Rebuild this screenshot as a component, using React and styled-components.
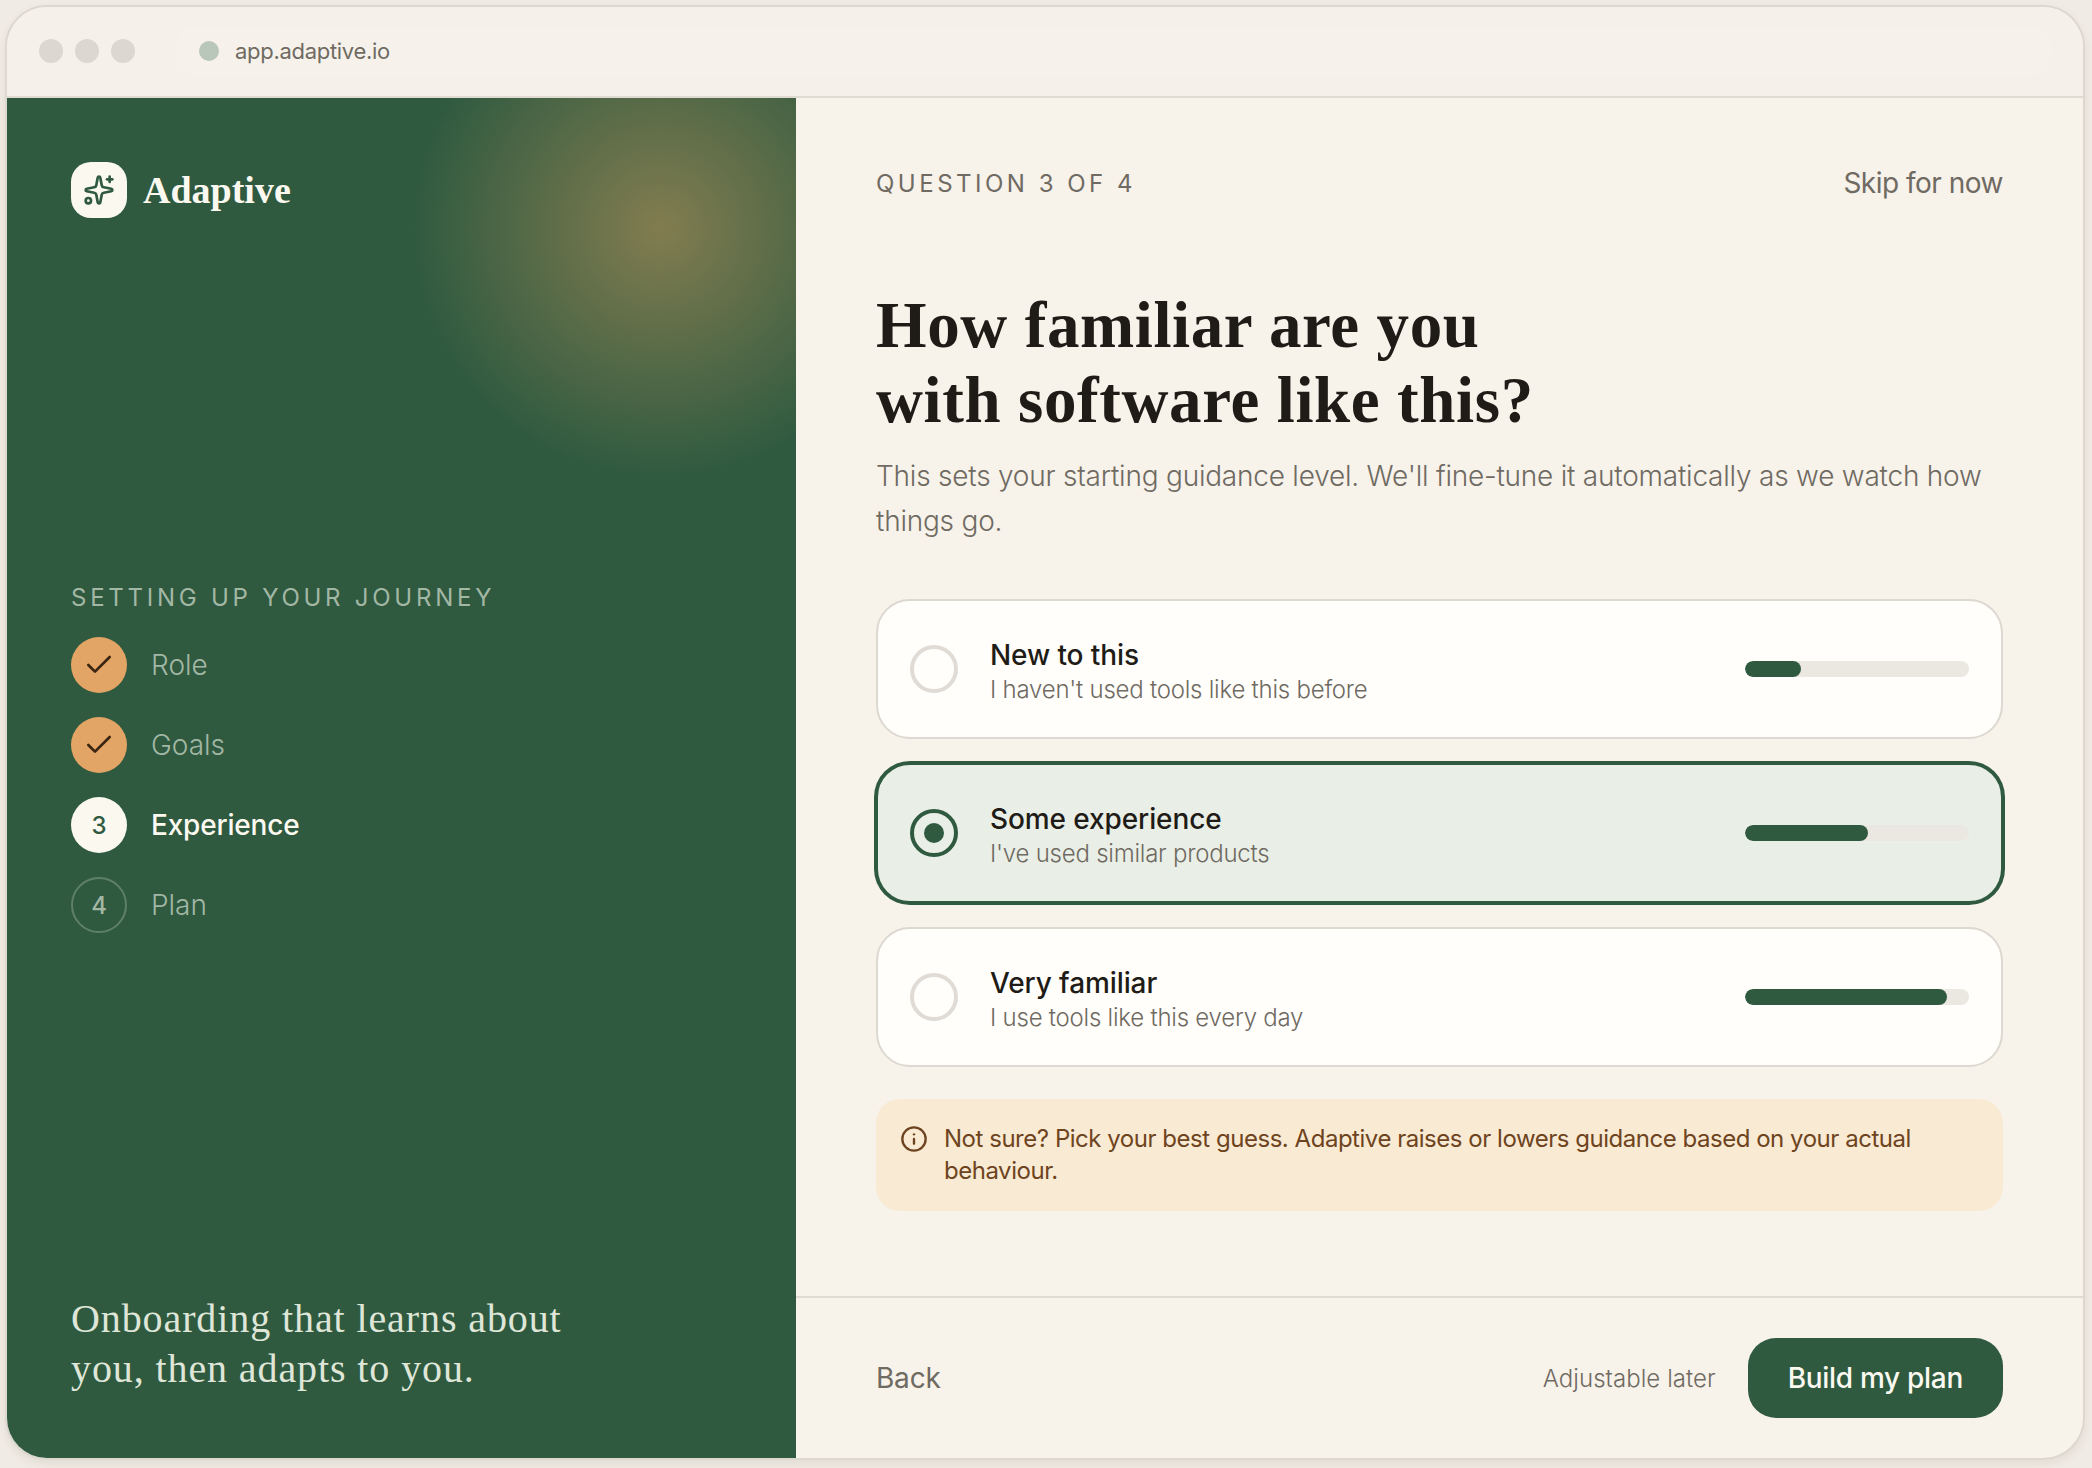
import React from 'react';
import styled, { createGlobalStyle } from 'styled-components';
import { Check, Info, Sparkles } from 'lucide-react';

const sans = `Inter, "Noto Sans", sans-serif`;
const serif = `"Liberation Serif", serif`;
const green = '#2f5a40';

const GlobalStyle = createGlobalStyle`
  * { box-sizing: border-box; }
  html, body { margin: 0; padding: 0; background: #f0ebe4; }
  body { font-family: ${sans}; }
`;

const Page = styled.div`
  width: 2092px;
  height: 1468px;
  padding: 5px 7px 8px 5px;
`;

const Window = styled.div`
  height: 100%;
  display: flex;
  flex-direction: column;
  border: 2px solid #dcd7cf;
  border-radius: 42px;
  background: #f7f2ea;
  overflow: hidden;
  box-shadow: 0 4px 10px rgba(60, 50, 30, 0.08);
`;

const TopBar = styled.header`
  height: 91px;
  flex: none;
  display: flex;
  align-items: center;
  padding: 0 32px 2px;
  border-bottom: 2px solid #dfdad2;
  background: #f5f1ea;
`;

const Dots = styled.div`
  display: flex;
  gap: 12px;
  margin-right: 40px;
`;

const Dot = styled.span`
  width: 24px;
  height: 24px;
  border-radius: 50%;
  background: #dcd8d1;
`;

const Address = styled.div`
  flex: 1;
  height: 50px;
  display: flex;
  align-items: center;
  gap: 16px;
  padding: 0 24px;
  border-radius: 24px;
  background: #f6f2eb;
  font-size: 22px;
  letter-spacing: -0.3px;
  color: #6f6a62;
`;

const Status = styled.span`
  width: 20px;
  height: 20px;
  border-radius: 50%;
  background: #b9c7bb;
`;

const Body = styled.div`
  flex: 1;
  min-height: 0;
  display: flex;
`;

const Sidebar = styled.aside`
  width: 789px;
  flex: none;
  display: flex;
  flex-direction: column;
  padding: 64px;
  color: #fcf9f1;
  background: radial-gradient(circle 250px at 654px 130px, rgba(228, 165, 98, 0.46), rgba(228, 165, 98, 0)) ${green};
`;

const Brand = styled.div`
  display: flex;
  align-items: center;
  gap: 16px;
`;

const BrandMark = styled.div`
  width: 56px;
  height: 56px;
  border-radius: 20px;
  display: flex;
  align-items: center;
  justify-content: center;
  background: #fbf8f0;
  color: ${green};
`;

const BrandName = styled.span`
  font-family: ${serif};
  font-size: 38px;
  font-weight: 700;
  color: #fbf8f0;
`;

const Steps = styled.nav`
  margin-top: 365px;
  display: flex;
  flex-direction: column;
`;

const StepsTitle = styled.div`
  font-size: 24px;
  line-height: 30px;
  letter-spacing: 3.75px;
  color: #a3b7a5;
  margin-bottom: 24px;
`;

const StepList = styled.ol`
  list-style: none;
  margin: 0;
  padding: 0;
  display: flex;
  flex-direction: column;
  gap: 24px;
`;

const StepRow = styled.li`
  display: flex;
  align-items: center;
  gap: 24px;
  font-size: 28px;
  font-weight: ${({ $state }) => ($state === 'current' ? 500 : 300)};
  letter-spacing: ${({ $state }) => ($state === 'current' ? '-0.2px' : '0')};
  color: ${({ $state }) => ($state === 'current' ? '#fcf9f1' : '#a3b7a5')};
`;

const stepCircles = {
  done: `background: #e2a565; color: #3a2412;`,
  current: `background: #fbf8f0; color: ${green};`,
  todo: `border: 2px solid #5f8068; color: #a3b7a5;`
};

const StepCircle = styled.span`
  width: 56px;
  height: 56px;
  border-radius: 50%;
  display: flex;
  align-items: center;
  justify-content: center;
  font-size: 24px;
  font-weight: 500;
  ${({ $state }) => stepCircles[$state]}
`;

const Quote = styled.p`
  margin: auto 0 0;
  font-family: ${serif};
  font-size: 40px;
  line-height: 50px;
  letter-spacing: 0.9px;
  color: #dfe6d8;
`;

const Main = styled.main`
  flex: 1;
  min-width: 0;
  display: flex;
  flex-direction: column;
`;

const Content = styled.div`
  flex: 1;
  min-height: 0;
  padding: 65px 80px 0;
`;

const MetaRow = styled.div`
  display: flex;
  justify-content: space-between;
  align-items: center;
  height: 40px;
`;

const Counter = styled.span`
  font-size: 24px;
  letter-spacing: 3.5px;
  color: #6f6a62;
`;

const Skip = styled.a`
  font-size: 28px;
  letter-spacing: -0.5px;
  color: #6f6a62;
`;

const Heading = styled.h1`
  margin: 85px 0 0;
  font-family: ${serif};
  font-size: 65px;
  line-height: 75px;
  font-weight: 700;
  letter-spacing: 0.6px;
  color: #1f1c17;
`;

const Lead = styled.p`
  margin: 16px 0 0;
  font-size: 28px;
  line-height: 45px;
  font-weight: 300;
  letter-spacing: -0.22px;
  color: #6f6a62;
`;

const Options = styled.div`
  margin-top: 55px;
  display: flex;
  flex-direction: column;
  gap: 24px;
`;

const OptionCard = styled.div`
  height: 140px;
  display: flex;
  align-items: center;
  gap: 32px;
  padding: 0 32px;
  border-radius: 34px;
  border: 2px solid ${({ $selected }) => ($selected ? green : '#ddd8d0')};
  background: ${({ $selected }) => ($selected ? '#e9efe6' : '#fffefb')};
  box-shadow: ${({ $selected }) => ($selected ? `0 0 0 2px ${green}` : 'none')};
`;

const Radio = styled.span`
  width: 48px;
  height: 48px;
  flex: none;
  border-radius: 50%;
  display: flex;
  align-items: center;
  justify-content: center;
  border: 4px solid ${({ $selected }) => ($selected ? green : '#e0dcd5')};
  &::after {
    content: "";
    display: ${({ $selected }) => ($selected ? 'block' : 'none')};
    width: 20px;
    height: 20px;
    border-radius: 50%;
    background: ${green};
  }
`;

const OptionText = styled.div`
  flex: 1;
  display: flex;
  flex-direction: column;
  margin-top: 4px;
`;

const OptionTitle = styled.span`
  font-size: 28px;
  line-height: 37px;
  font-weight: 500;
  letter-spacing: -0.1px;
  color: #1f1c17;
`;

const OptionHint = styled.span`
  font-size: 24px;
  line-height: 32px;
  font-weight: 300;
  letter-spacing: -0.23px;
  color: #6f6a62;
`;

const Meter = styled.div`
  width: 224px;
  height: 16px;
  border-radius: 8px;
  background: #ebe8e1;
  overflow: hidden;
`;

const MeterFill = styled.div`
  height: 100%;
  border-radius: 8px;
  background: ${green};
`;

const Notice = styled.div`
  margin-top: 32px;
  display: flex;
  gap: 16px;
  padding: 24px;
  border-radius: 24px;
  background: #f9ead4;
  color: #6e4420;
  font-size: 24px;
  line-height: 32px;
  letter-spacing: -0.47px;
  svg {
    flex: none;
    margin-top: 2px;
  }
`;

const Footer = styled.footer`
  height: 162px;
  flex: none;
  display: flex;
  align-items: center;
  padding: 0 80px;
  gap: 32px;
  border-top: 2px solid #dfdad2;
`;

const Back = styled.a`
  margin-right: auto;
  font-size: 28px;
  letter-spacing: -0.2px;
  color: #6f6a62;
`;

const FooterNote = styled.span`
  font-size: 24px;
  font-weight: 300;
  letter-spacing: 0.05px;
  color: #6f6a62;
`;

const PrimaryButton = styled.button`
  height: 80px;
  padding: 0 40px;
  border: 0;
  border-radius: 28px;
  background: ${green};
  color: #fbf8f0;
  font-family: ${sans};
  font-size: 28px;
  font-weight: 500;
  letter-spacing: -0.3px;
`;

const steps = [
  { label: 'Role', state: 'done' },
  { label: 'Goals', state: 'done' },
  { label: 'Experience', state: 'current', num: 3 },
  { label: 'Plan', state: 'todo', num: 4 }
];

const options = [
  { title: 'New to this', hint: "I haven't used tools like this before", level: 25 },
  { title: 'Some experience', hint: "I've used similar products", level: 55, selected: true },
  { title: 'Very familiar', hint: 'I use tools like this every day', level: 90 }
];

export default function App () {
  return (
    <Page>
      <GlobalStyle />
      <Window>
        <TopBar>
          <Dots>
            <Dot />
            <Dot />
            <Dot />
          </Dots>
          <Address>
            <Status />
            app.adaptive.io
          </Address>
        </TopBar>
        <Body>
          <Sidebar>
            <Brand>
              <BrandMark>
                <Sparkles size={32} />
              </BrandMark>
              <BrandName>Adaptive</BrandName>
            </Brand>
            <Steps>
              <StepsTitle>SETTING UP YOUR JOURNEY</StepsTitle>
              <StepList>
                {steps.map((step) => (
                  <StepRow key={step.label} $state={step.state}>
                    <StepCircle $state={step.state}>
                      {step.state === 'done' ? <Check size={32} /> : step.num}
                    </StepCircle>
                    {step.label}
                  </StepRow>
                ))}
              </StepList>
            </Steps>
            <Quote>
              Onboarding that learns about
              <br />
              you, then adapts to you.
            </Quote>
          </Sidebar>
          <Main>
            <Content>
              <MetaRow>
                <Counter>QUESTION 3 OF 4</Counter>
                <Skip>Skip for now</Skip>
              </MetaRow>
              <Heading>
                How familiar are you
                <br />
                with software like this?
              </Heading>
              <Lead>
                This sets your starting guidance level. We'll fine-tune it automatically as we watch how
                <br />
                things go.
              </Lead>
              <Options>
                {options.map((option) => (
                  <OptionCard key={option.title} $selected={option.selected}>
                    <Radio $selected={option.selected} />
                    <OptionText>
                      <OptionTitle>{option.title}</OptionTitle>
                      <OptionHint>{option.hint}</OptionHint>
                    </OptionText>
                    <Meter>
                      <MeterFill style={{ width: `${option.level}%` }} />
                    </Meter>
                  </OptionCard>
                ))}
              </Options>
              <Notice>
                <Info size={28} />
                <span>
                  Not sure? Pick your best guess. Adaptive raises or lowers guidance based on your actual
                  <br />
                  behaviour.
                </span>
              </Notice>
            </Content>
            <Footer>
              <Back>Back</Back>
              <FooterNote>Adjustable later</FooterNote>
              <PrimaryButton>Build my plan</PrimaryButton>
            </Footer>
          </Main>
        </Body>
      </Window>
    </Page>
  );
}
